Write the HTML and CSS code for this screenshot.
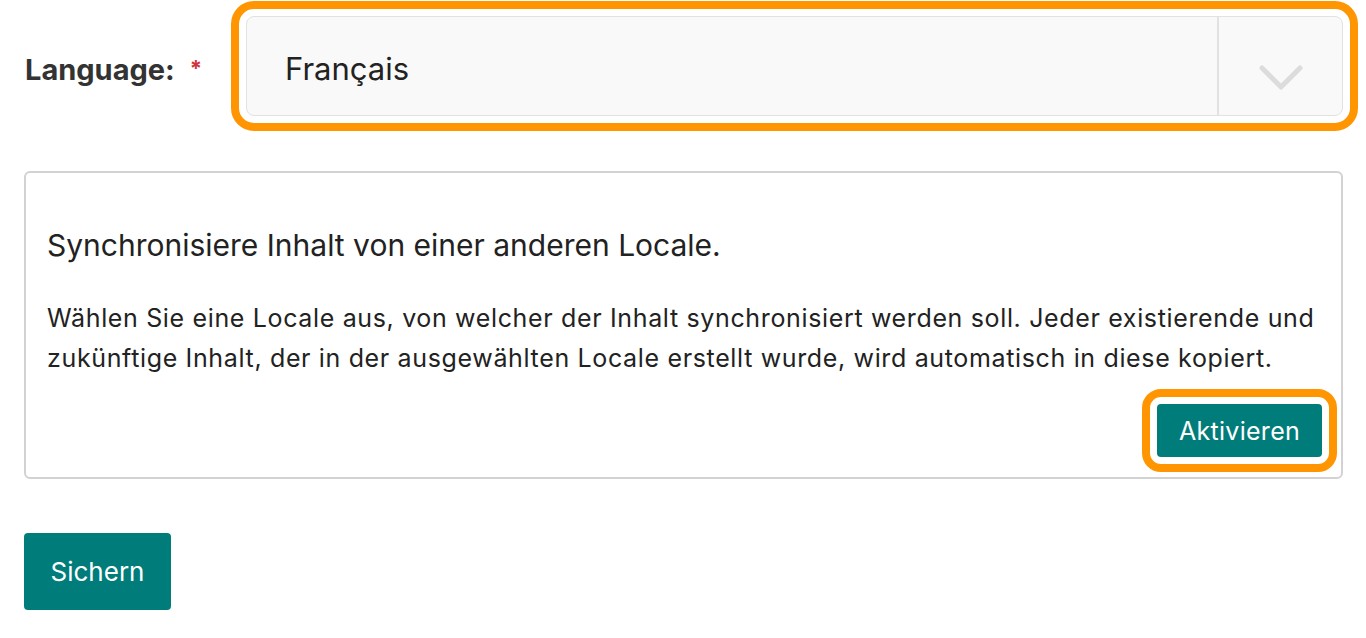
FILE: index.html
```html
<!DOCTYPE html>
<html lang="de">
<head>
    <meta charset="UTF-8">
    <meta name="viewport" content="width=device-width, initial-scale=1.0">
    <title>Locale</title>
    <link rel="stylesheet" href="styles.css">
</head>
<body>
    <!-- Sprache -->
    <div class="field-row">
        <label class="field-label" for="language">Language: <span class="required">*</span></label>
        <div class="select highlight">
            <span class="select-value">Français</span>
            <span class="select-toggle">
                <svg width="46" height="28" viewBox="0 0 46 28">
                    <polyline points="4,4 23,23 42,4" fill="none" stroke="#dcdcdc" stroke-width="5" stroke-linecap="round" stroke-linejoin="round"/>
                </svg>
            </span>
        </div>
    </div>

    <!-- Synchronisation -->
    <div class="sync-card">
        <h2>Synchronisiere Inhalt von einer anderen Locale.</h2>
        <p>Wählen Sie eine Locale aus, von welcher der Inhalt synchronisiert werden soll. Jeder existierende und zukünftige Inhalt, der in der ausgewählten Locale erstellt wurde, wird automatisch in diese kopiert.</p>
        <div class="card-actions">
            <button type="button" class="btn btn-small highlight">Aktivieren</button>
        </div>
    </div>

    <button type="button" class="btn btn-save">Sichern</button>
</body>
</html>
```

FILE: styles.css
```css
body {
    font-family: Inter, "Noto Sans", sans-serif;
    margin: 0;
    padding: 16px 23px 0 24px;
    background-color: #ffffff;
    color: #222;
}
.highlight {
    outline: 8px solid #ff9500;
    outline-offset: 7px;
}
.field-row {
    display: flex;
    align-items: center;
}
.field-label {
    width: 221px;
    font-size: 29px;
    font-weight: bold;
    color: #333;
    padding-left: 1px;
    padding-top: 6px;
}
.required {
    color: #d0343a;
    font-size: 22px;
    margin-left: 8px;
    vertical-align: 4px;
}
.select {
    flex: 1;
    display: flex;
    height: 98px;
    background: #f9f9f9;
    border: 1px solid #e2e2e2;
    border-radius: 8px;
}
.select-value {
    flex: 1;
    display: flex;
    align-items: center;
    padding-left: 38px;
    padding-top: 4px;
    font-size: 31px;
    color: #222;
}
.select-toggle {
    width: 123px;
    border-left: 2px solid #e2e2e2;
    display: flex;
    align-items: center;
    justify-content: center;
    padding-top: 24px;
}
.sync-card {
    margin-top: 55px;
    border: 2px solid #d2d2d2;
    border-radius: 6px;
    padding: 54px 19px 20px 21px;
}
.sync-card h2 {
    margin: 0 0 35px;
    font-size: 30px;
    line-height: 36px;
    font-weight: normal;
    color: #222;
}
.sync-card p {
    margin: 0;
    font-size: 25px;
    letter-spacing: 0.65px;
    line-height: 40px;
    color: #222;
}
.card-actions {
    display: flex;
    justify-content: flex-end;
    margin-top: 26px;
}
.btn {
    background-color: #007d7a;
    color: white;
    border: none;
    font-family: inherit;
    cursor: pointer;
}
.btn-small {
    width: 165px;
    height: 53px;
    font-size: 25px;
    letter-spacing: 0.3px;
    border-radius: 4px;
}
.btn-save {
    display: block;
    margin-top: 54px;
    width: 147px;
    height: 77px;
    font-size: 26px;
    border-radius: 4px;
}
```
